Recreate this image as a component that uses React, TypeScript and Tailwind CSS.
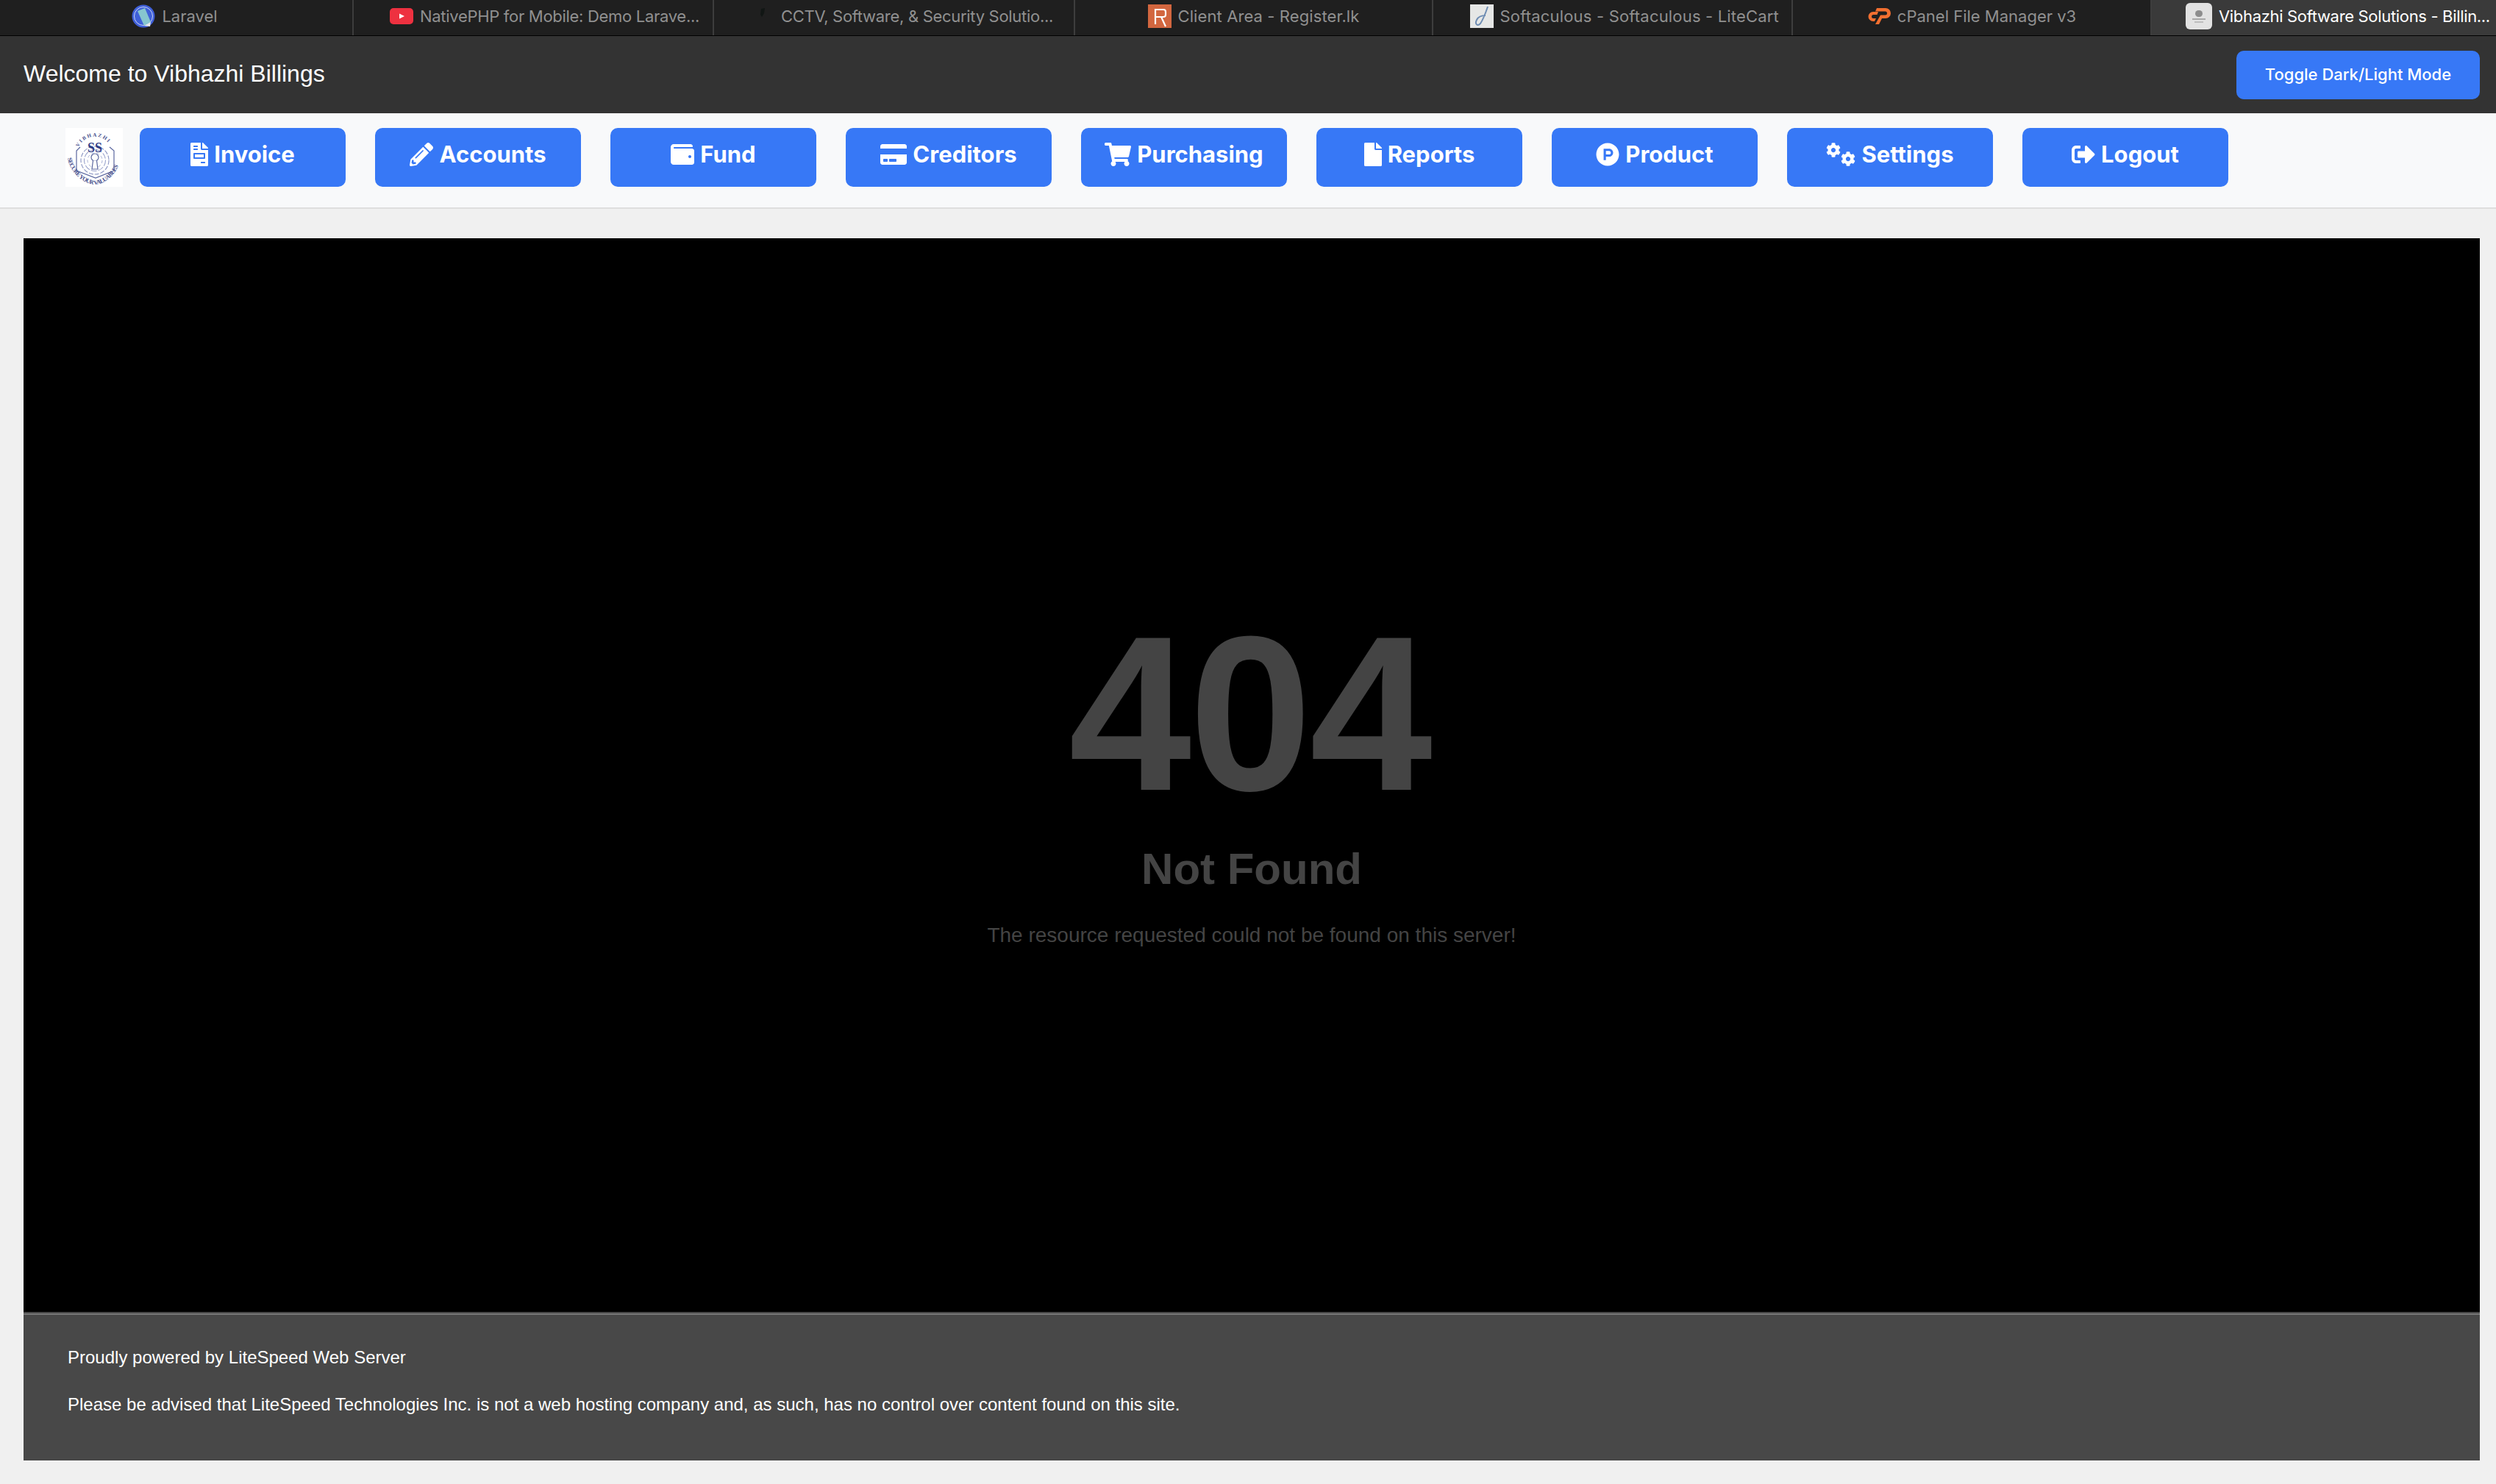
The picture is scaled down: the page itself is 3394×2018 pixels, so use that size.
import React from 'react';
import {
  FaCog,
  FaCreditCard,
  FaFile,
  FaFileInvoice,
  FaPencilAlt,
  FaProductHunt,
  FaShoppingCart,
  FaSignOutAlt,
  FaWallet,
} from 'react-icons/fa';

const LaravelIcon = () => (
  <svg viewBox="0 0 32 32" className="w-[32px] h-[32px] shrink-0">
    <circle cx="16" cy="16" r="15.5" fill="#3f5fd8" />
    <circle cx="16" cy="16" r="12.5" fill="none" stroke="#c9d4f5" strokeWidth="1" />
    <path d="M8 9 L18 5 L26 24 L17 29 Z" fill="#86c5cf" />
    <path d="M17 29 L26 24 L25 30 Z" fill="#e8e8e8" />
  </svg>
);

const YoutubeIcon = () => (
  <svg viewBox="0 0 32 22" className="w-[32px] h-[22px] shrink-0">
    <rect width="32" height="22" rx="5" fill="#ee3140" />
    <path d="M13 7.5 L20 11 L13 14.5 Z" fill="#fff" />
  </svg>
);

const CctvIcon = () => (
  <svg viewBox="0 0 32 32" className="w-[32px] h-[32px] shrink-0">
    <path d="M14 6 L19 5 L18 12 L15 17 L13 14 Z" fill="#111614" />
  </svg>
);

const RegisterIcon = () => (
  <div className="w-[32px] h-[32px] shrink-0 bg-[#d2663f] flex items-center justify-center">
    <svg viewBox="0 0 32 32" className="w-[32px] h-[32px]">
      <path d="M10 27 V7 H21 Q24 7 24 10 V14 Q24 17 21 17 H10 M18 17 L24 30" fill="none" stroke="#fff" strokeWidth="2.2" />
    </svg>
  </div>
);

const SoftaculousIcon = () => (
  <svg viewBox="0 0 32 32" className="w-[32px] h-[32px] shrink-0">
    <rect width="32" height="32" fill="#e6e7e6" />
    <path d="M24 3 C21 12 18 20 14 26 C10 30 6 27 9 21 C11 17 16 15 21 15" fill="none" stroke="#6f8db3" strokeWidth="2" />
  </svg>
);

const CpanelIcon = () => (
  <svg viewBox="0 0 32 24" className="w-[32px] h-[24px] shrink-0">
    <path d="M15 6 H8 A6.5 6.5 0 0 0 8 19 H10 L12 15 H8.5 A2.5 2.5 0 0 1 8.5 10 H13.5 Z" fill="#f26f30" />
    <path d="M13 1 H25 A7 7 0 0 1 25 15 H20 L16 23 H11 L18 10.5 H24.5 A2.5 2.5 0 0 0 24.5 5.5 H11 Z" fill="#f26f30" />
  </svg>
);

const VibhazhiFavicon = () => (
  <div className="w-[36px] h-[36px] shrink-0 rounded-[6px] bg-[#e2e2e2] flex flex-col items-center justify-center gap-[2px]">
    <span className="w-[10px] h-[9px] rounded-full bg-[#8d8d8d]" />
    <span className="w-[18px] h-[2px] bg-[#a8a8a8]" />
    <span className="w-[12px] h-[2px] bg-[#bcbcbc]" />
  </div>
);

const CogsIcon = () => (
  <div className="w-[40px] h-[32px] flex justify-between shrink-0">
    <FaCog className="w-[20px] h-[20px] self-start" />
    <FaCog className="w-[20px] h-[20px] self-end" />
  </div>
);

const tabs = [
  { title: 'Laravel', icon: <LaravelIcon />, box: 'w-[481px] justify-center pr-[4px]', text: '' },
  { title: 'NativePHP for Mobile: Demo Larave...', icon: <YoutubeIcon />, box: 'w-[490px] justify-end pr-[18px]', text: 'tracking-[-0.3px]' },
  { title: 'CCTV, Software, & Security Solutio...', icon: <CctvIcon />, box: 'w-[491px] justify-end pr-[28px]', text: 'tracking-[-0.3px]' },
  { title: 'Client Area - Register.lk', icon: <RegisterIcon />, box: 'w-[487px] justify-center', text: 'tracking-[0.1px]' },
  { title: 'Softaculous - Softaculous - LiteCart', icon: <SoftaculousIcon />, box: 'w-[489px] justify-end pr-[17px]', text: 'tracking-[0.18px]' },
  { title: 'cPanel File Manager v3', icon: <CpanelIcon />, box: 'w-[488px] justify-center', text: '' },
];

const navItems = [
  { label: 'Invoice', icon: <FaFileInvoice className="w-[24px] h-[32px]" /> },
  { label: 'Accounts', icon: <FaPencilAlt className="w-[32px] h-[32px]" /> },
  { label: 'Fund', icon: <FaWallet className="w-[32px] h-[32px]" /> },
  { label: 'Creditors', icon: <FaCreditCard className="w-[36px] h-[32px]" /> },
  { label: 'Purchasing', icon: <FaShoppingCart className="w-[36px] h-[32px]" /> },
  { label: 'Reports', icon: <FaFile className="w-[24px] h-[32px]" /> },
  { label: 'Product', icon: <FaProductHunt className="w-[32px] h-[32px]" /> },
  { label: 'Settings', icon: <CogsIcon /> },
  { label: 'Logout', icon: <FaSignOutAlt className="w-[32px] h-[32px]" /> },
];

const Logo = () => (
  <div className="w-[78px] h-[80px] shrink-0 bg-white">
    <svg viewBox="0 0 78 80" className="w-[78px] h-[80px]">
      <defs>
        <path id="logo-top" d="M18 26 A24 24 0 0 1 62 26" />
        <path id="logo-bottom" d="M3 41 C6 60 24 76 40 77 C56 76 72 60 75 41" />
      </defs>
      <path d="M20 26 L15 31 V58 L41 68 L66 58 V31 L60 26" fill="none" stroke="#5b679f" strokeWidth="1.2" />
      <circle cx="40" cy="44" r="19" fill="none" stroke="#8a94c2" strokeWidth="1.1" strokeDasharray="6 2" />
      <circle cx="40" cy="44" r="14.5" fill="none" stroke="#9aa3cc" strokeWidth="1.1" strokeDasharray="8 2" />
      <circle cx="40" cy="44" r="10" fill="none" stroke="#aab2d6" strokeWidth="1" strokeDasharray="4 3" />
      <circle cx="40" cy="40" r="5" fill="#fff" stroke="#5b679f" strokeWidth="1.2" />
      <path d="M37.5 44.5 L36 56 H44 L42.5 44.5" fill="#fff" stroke="#5b679f" strokeWidth="1.2" />
      <text fontFamily="'Liberation Serif', serif" fontSize="7" fontWeight="700" fill="#3f4b8a">
        <textPath href="#logo-top" textLength="48">VIBHAZHI</textPath>
      </text>
      <text x="40" y="33" textAnchor="middle" fontFamily="'Liberation Serif', serif" fontSize="18" fontWeight="700" fill="#2f3c86">
        SS
      </text>
      <text fontFamily="'Liberation Serif', serif" fontSize="8.2" fontWeight="700" fill="#3f4b8a">
        <textPath href="#logo-bottom" textLength="98">SECURE YOUR VALUABLES</textPath>
      </text>
    </svg>
  </div>
);

export default function App() {
  return (
    <div className="w-[3394px] h-[2018px] overflow-hidden bg-[#f0f0f0] flex flex-col font-['Liberation_Sans',sans-serif]">
      <div className="flex h-[49px] shrink-0 border-b border-black bg-[#1f1f1f] font-['Inter',sans-serif] text-[22px] text-[#909090]">
        {tabs.map((tab) => (
          <div key={tab.title} className={`${tab.box} flex items-center gap-[9px] pb-[4px] border-r-2 border-[#3d3d3d]`}>
            {tab.icon}
            <span className={`whitespace-nowrap ${tab.text}`}>{tab.title}</span>
          </div>
        ))}
        <div className="flex-1 flex items-center pl-[46px] pb-[4px] gap-[9px] bg-[#3a3a3a] text-white overflow-hidden">
          <VibhazhiFavicon />
          <span className="whitespace-nowrap tracking-[-0.33px]">Vibhazhi Software Solutions - Billin...</span>
        </div>
      </div>

      <header className="h-[105px] shrink-0 bg-[#333333] flex items-center justify-between pl-[32px] pr-[22px]">
        <h1 className="text-[32px] text-white pb-[4px]">Welcome to Vibhazhi Billings</h1>
        <button className="w-[331px] h-[66px] rounded-[10px] bg-[#3778f6] text-white text-[22px] font-medium font-['Inter',sans-serif]">
          Toggle Dark/Light Mode
        </button>
      </header>

      <nav className="h-[130px] shrink-0 bg-[#f8f9fa] border-b-2 border-[#dedede] flex pt-[20px] pl-[89px]">
        <div className="mr-[23px]">
          <Logo />
        </div>
        <div className="flex gap-[40px]">
          {navItems.map((item) => (
            <a key={item.label} className="w-[280px] h-[80px] pb-[8px] rounded-[10px] bg-[#3778f6] text-white flex items-center justify-center gap-[8px] text-[31px] font-bold font-['Inter',sans-serif]">
              {item.icon}
              {item.label}
            </a>
          ))}
        </div>
      </nav>

      <main className="flex flex-col ml-[32px] mr-[22px] mt-[40px] bg-[#484848]">
        <div className="h-[1460px] bg-black text-[#444444] flex flex-col items-center pt-[496px]">
          <div className="text-[300px] font-bold leading-[1] tracking-[-3px] mr-[6px]">404</div>
          <h2 className="text-[60px] font-bold mt-[26px] leading-[1.2]">Not Found</h2>
          <p className="text-[28px] mt-[33px]">The resource requested could not be found on this server!</p>
        </div>
        <footer className="h-[200px] mt-[2px] bg-[#484848] border-t-2 border-[#777777] text-white text-[24px] px-[60px] pt-[42px]">
          <p className="leading-[32px]">Proudly powered by LiteSpeed Web Server</p>
          <p className="leading-[32px] mt-[32px]">Please be advised that LiteSpeed Technologies Inc. is not a web hosting company and, as such, has no control over content found on this site.</p>
        </footer>
      </main>
    </div>
  );
}
